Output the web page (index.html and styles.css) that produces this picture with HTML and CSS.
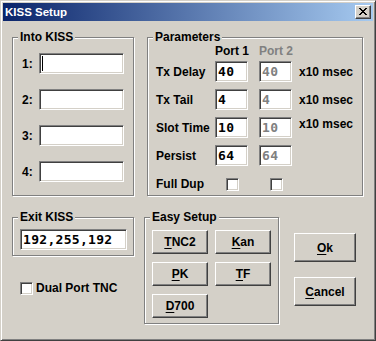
FILE: index.html
```html
<!DOCTYPE html>
<html>
<head>
<meta charset="utf-8">
<title>KISS Setup</title>
<link rel="stylesheet" href="styles.css">
</head>
<body>
<div class="window">
  <div class="caption">
    <span class="caption-title">KISS Setup</span>
    <div class="close-btn">
      <svg width="8" height="7" viewBox="0 0 8 7" shape-rendering="crispEdges"><path fill="#000" d="M0 0h2v1H0z M6 0h2v1H6z M1 1h2v1H1z M5 1h2v1H5z M2 2h4v1H2z M3 3h2v1H3z M2 4h4v1H2z M1 5h2v1H1z M5 5h2v1H5z M0 6h2v1H0z M6 6h2v1H6z"/></svg>
    </div>
  </div>
  <div class="client">
    <div class="row-top">
      <div class="group into">
        <span class="group-label">Into KISS</span>
        <div class="into-row"><span class="into-label">1:</span><div class="edit into-edit"><span class="caret"></span></div></div>
        <div class="into-row"><span class="into-label">2:</span><div class="edit into-edit"></div></div>
        <div class="into-row"><span class="into-label">3:</span><div class="edit into-edit"></div></div>
        <div class="into-row"><span class="into-label">4:</span><div class="edit into-edit"></div></div>
      </div>
      <div class="group params">
        <span class="group-label">Parameters</span>
        <div class="prow phead"><span></span><span class="port">Port 1</span><span class="port disabled">Port 2</span></div>
        <div class="prow pfield"><span class="plabel">Tx Delay</span><div class="edit pedit">40</div><div class="edit pedit dis">40</div><span class="unit">x10 msec</span></div>
        <div class="prow pfield"><span class="plabel">Tx Tail</span><div class="edit pedit">4</div><div class="edit pedit dis">4</div><span class="unit">x10 msec</span></div>
        <div class="prow pfield"><span class="plabel">Slot Time</span><div class="edit pedit">10</div><div class="edit pedit dis">10</div><span class="unit unit-top">x10 msec</span></div>
        <div class="prow pfield last"><span class="plabel">Persist</span><div class="edit pedit">64</div><div class="edit pedit dis">64</div></div>
        <div class="prow pcheck"><span class="plabel">Full Dup</span><span class="check pc"></span><span class="check pc"></span></div>
      </div>
    </div>
    <div class="row-bottom">
      <div class="left-col">
        <div class="group exit">
          <span class="group-label">Exit KISS</span>
          <div class="edit exit-edit">192,255,192</div>
        </div>
        <div class="dual"><span class="check"></span><span class="dual-label">Dual Port TNC</span></div>
      </div>
      <div class="group easy">
        <span class="group-label">Easy Setup</span>
        <div class="easy-grid">
          <div class="btn"><u>T</u>NC2</div>
          <div class="btn"><u>K</u>an</div>
          <div class="btn"><u>P</u>K</div>
          <div class="btn"><u>T</u>F</div>
          <div class="btn"><u>D</u>700</div>
        </div>
      </div>
      <div class="dlg-buttons">
        <div class="btn big"><u>O</u>k</div>
        <div class="btn big"><u>C</u>ancel</div>
      </div>
    </div>
  </div>
</div>
</body>
</html>
```
FILE: styles.css
```css
* { box-sizing: border-box; }
body {
  margin: 0;
  background: #D4D0C8;
  font-family: "Liberation Sans", Arial, sans-serif;
  font-size: 12px;
  font-weight: bold;
  line-height: 14px;
  color: #000;
}
.window {
  width: 376px;
  height: 341px;
  border: 1px solid;
  border-color: #D4D0C8 #404040 #404040 #D4D0C8;
  box-shadow: inset 1px 1px 0 #fff, inset -1px -1px 0 #808080;
  padding: 2px;
  background: #D4D0C8;
  overflow: hidden;
}
.caption {
  height: 18px;
  display: flex;
  align-items: center;
  padding-left: 2px;
  background: linear-gradient(to right, #0A246A, #A6CAF0);
  color: #fff;
}
.caption-title { font-size: 11.5px; }
.close-btn {
  margin-left: auto;
  margin-right: 2px;
  width: 16px;
  height: 14px;
  background: #D4D0C8;
  border: 1px solid;
  border-color: #fff #404040 #404040 #fff;
  box-shadow: inset -1px -1px 0 #808080;
  padding: 2px 0 0 3px;
}
.close-btn svg { display: block; }
.client { margin-top: 1px; }
.row-top {
  display: flex;
  margin-top: 16px;
  padding-left: 9px;
  gap: 13px;
}
.group {
  position: relative;
  border: 1px solid #808080;
  box-shadow: 1px 1px 0 #fff, inset 1px 1px 0 #fff;
}
.group-label {
  position: absolute;
  top: -8px;
  left: 5px;
  padding: 0 2px;
  background: #D4D0C8;
  white-space: nowrap;
}
.into {
  width: 122px;
  height: 159px;
  padding: 15px 0 0 9px;
  display: flex;
  flex-direction: column;
  gap: 15px;
}
.into-row { display: flex; align-items: center; }
.into-label { width: 17px; }
.edit {
  background: #fff;
  border: 1px solid;
  border-color: #808080 #fff #fff #808080;
  box-shadow: inset 1px 1px 0 #404040, inset -1px -1px 0 #D4D0C8;
  height: 21px;
  display: flex;
  align-items: center;
  padding-left: 2px;
  font-family: "DejaVu Sans Mono", monospace;
  font-size: 13px;
  letter-spacing: 0.3px;
  font-weight: bold;
  white-space: nowrap;
}
.into-edit { width: 85px; }
.caret { width: 1px; height: 15px; background: #000; }
.params {
  width: 216px;
  height: 159px;
  padding: 6px 0 0 8px;
}
.prow {
  display: grid;
  grid-template-columns: 59px 44px 40px auto;
  align-items: center;
  white-space: nowrap;
}
.phead { height: 14px; margin-bottom: 3px; }
.port { width: 33px; text-align: center; }
.disabled { color: #808080; }
.pfield { height: 21px; margin-bottom: 7px; }
.pfield.last { margin-bottom: 11px; }
.pedit { width: 33px; }
.dis { color: #808080; }
.unit-top { align-self: start; }
.pcheck { height: 13px; }
.check {
  display: block;
  width: 13px;
  height: 13px;
  background: #fff;
  border: 1px solid;
  border-color: #808080 #fff #fff #808080;
  box-shadow: inset 1px 1px 0 #404040, inset -1px -1px 0 #D4D0C8;
}
.pc { margin-left: 11px; }
.row-bottom {
  display: flex;
  margin-top: 21px;
  padding-left: 9px;
}
.left-col {
  width: 122px;
  display: flex;
  flex-direction: column;
}
.exit {
  height: 39px;
  padding: 11px 0 0 7px;
}
.exit-edit { width: 107px; }
.dual {
  display: flex;
  align-items: center;
  gap: 3px;
  margin-top: 25px;
  padding-left: 8px;
}
.easy {
  margin-left: 10px;
  width: 135px;
  height: 107px;
  padding: 12px 0 0 7px;
}
.easy-grid {
  display: grid;
  grid-template-columns: 56px 56px;
  column-gap: 7px;
  row-gap: 8px;
}
.btn {
  height: 24px;
  display: flex;
  align-items: center;
  justify-content: center;
  background: #D4D0C8;
  border: 1px solid;
  border-color: #fff #404040 #404040 #fff;
  box-shadow: inset -1px -1px 0 #808080;
  white-space: nowrap;
}
.btn u {
  text-decoration: underline;
  text-decoration-thickness: 1px;
  text-underline-offset: 2px;
}
.dlg-buttons {
  margin-left: 15px;
  padding-top: 16px;
  display: flex;
  flex-direction: column;
  gap: 15px;
}
.big { width: 62px; height: 29px; }
```
